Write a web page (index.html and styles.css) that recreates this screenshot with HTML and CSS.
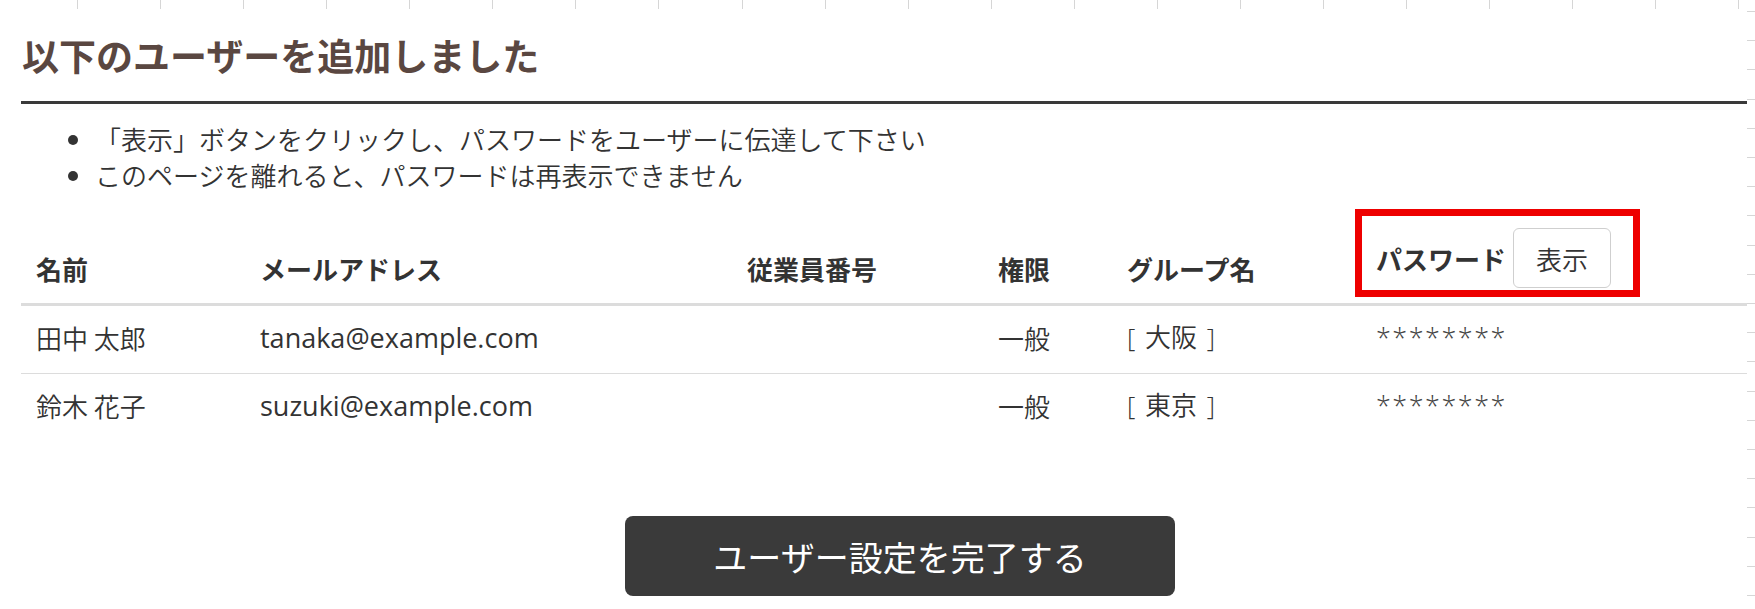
FILE: index.html
```html
<!DOCTYPE html>
<html lang="ja">
<head>
<meta charset="utf-8">
<title>ユーザー追加完了</title>
<link rel="stylesheet" href="styles.css">
</head>
<body>
<main class="page">
  <h1 class="page-title">以下のユーザーを追加しました</h1>
  <ul class="notes">
    <li>「表示」ボタンをクリックし、パスワードをユーザーに伝達して下さい</li>
    <li>このページを離れると、パスワードは再表示できません</li>
  </ul>
  <table class="users">
    <colgroup>
      <col class="col-name">
      <col class="col-mail">
      <col class="col-code">
      <col class="col-role">
      <col class="col-group">
      <col class="col-pass">
    </colgroup>
    <thead>
      <tr>
        <th>名前</th>
        <th>メールアドレス</th>
        <th>従業員番号</th>
        <th>権限</th>
        <th>グループ名</th>
        <th>
          <div class="pw-head">
            <span>パスワード</span>
            <button type="button" class="btn-show">表示</button>
            <span class="highlight" aria-hidden="true"></span>
          </div>
        </th>
      </tr>
    </thead>
    <tbody>
      <tr>
        <td>田中 太郎</td>
        <td class="latin">tanaka@example.com</td>
        <td></td>
        <td>一般</td>
        <td class="latin group">[ 大阪 ]</td>
        <td class="latin mask">********</td>
      </tr>
      <tr>
        <td>鈴木 花子</td>
        <td class="latin">suzuki@example.com</td>
        <td></td>
        <td>一般</td>
        <td class="latin group">[ 東京 ]</td>
        <td class="latin mask">********</td>
      </tr>
    </tbody>
  </table>
  <div class="actions">
    <button type="button" class="btn-finish">ユーザー設定を完了する</button>
  </div>
</main>
</body>
</html>
```
FILE: styles.css
```css
html, body {
  margin: 0;
  background: #fff;
}

body {
  min-height: 609px;
  font-family: "Noto Sans CJK JP", sans-serif;
  color: #333;
  /* sheet ruler ticks along the top and right edges */
  background-image:
    repeating-linear-gradient(to right, transparent 0 77px, #d6d6d6 77px 78px, transparent 78px 83.07px),
    repeating-linear-gradient(to bottom, transparent 0 11px, #d6d6d6 11px 12px, transparent 12px 29.2px);
  background-size: 100% 9px, 8px 100%;
  background-position: left top, right top;
  background-repeat: no-repeat;
}

.page {
  width: 1726px;
  margin-left: 21px;
  padding-top: 30px;
}

.page-title {
  margin: 0;
  padding: 0 0 21px 1px;
  font-size: 37px;
  line-height: 50px;
  font-weight: 700;
  color: #5a4741;
  border-bottom: 3px solid #3a3a3a;
}

.notes {
  margin: 17px 0 0;
  padding-left: 74px;
  font-size: 26px;
  line-height: 36px;
  font-weight: 350;
}

.users {
  width: 100%;
  margin-top: 25px;
  border-collapse: separate;
  border-spacing: 0;
  table-layout: fixed;
  font-size: 26px;
  line-height: 39px;
}

.col-name { width: 224px; }
.col-mail { width: 487px; }
.col-code { width: 251px; }
.col-role { width: 129px; }
.col-group { width: 249px; }

.users th {
  text-align: left;
  vertical-align: bottom;
  padding: 10px 15px 15px;
  font-weight: 700;
  color: #333;
  border-bottom: 3px solid #dcdcdc;
}

.users td {
  padding: 12px 15px 16px;
  font-weight: 350;
  border-bottom: 1px solid #dcdcdc;
  white-space: nowrap;
}

.users tbody tr:last-child td {
  border-bottom: none;
}

.latin {
  font-family: "Open Sans", "Noto Sans CJK JP", sans-serif;
}

.users td.latin {
  font-size: 27px;
  font-weight: 400;
}

.users td.group {
  font-size: 26px;
  font-weight: 350;
  word-spacing: 3px;
}

.users td.mask {
  font-weight: 300;
  color: #444;
  letter-spacing: 1.5px;
}

.pw-head {
  position: relative;
  display: flex;
  align-items: center;
  gap: 7px;
}

.btn-show {
  width: 98px;
  height: 60px;
  padding: 0;
  font-family: "Noto Sans CJK JP", sans-serif;
  font-size: 26px;
  font-weight: 350;
  color: #333;
  background: #fff;
  border: 1px solid #cfcfcf;
  border-radius: 6px;
}

/* red call-out frame around the password header */
.highlight {
  position: absolute;
  left: -21px;
  top: -19px;
  width: 285px;
  height: 88px;
  box-sizing: border-box;
  border: 7px solid #ee0000;
  pointer-events: none;
}

.actions {
  display: flex;
  justify-content: center;
  padding-left: 32px;
  margin-top: 75px;
}

.btn-finish {
  width: 550px;
  height: 80px;
  font-family: "Noto Sans CJK JP", sans-serif;
  font-size: 34px;
  font-weight: 400;
  color: #fff;
  background: #3a3a3a;
  border: none;
  border-radius: 8px;
}
```
